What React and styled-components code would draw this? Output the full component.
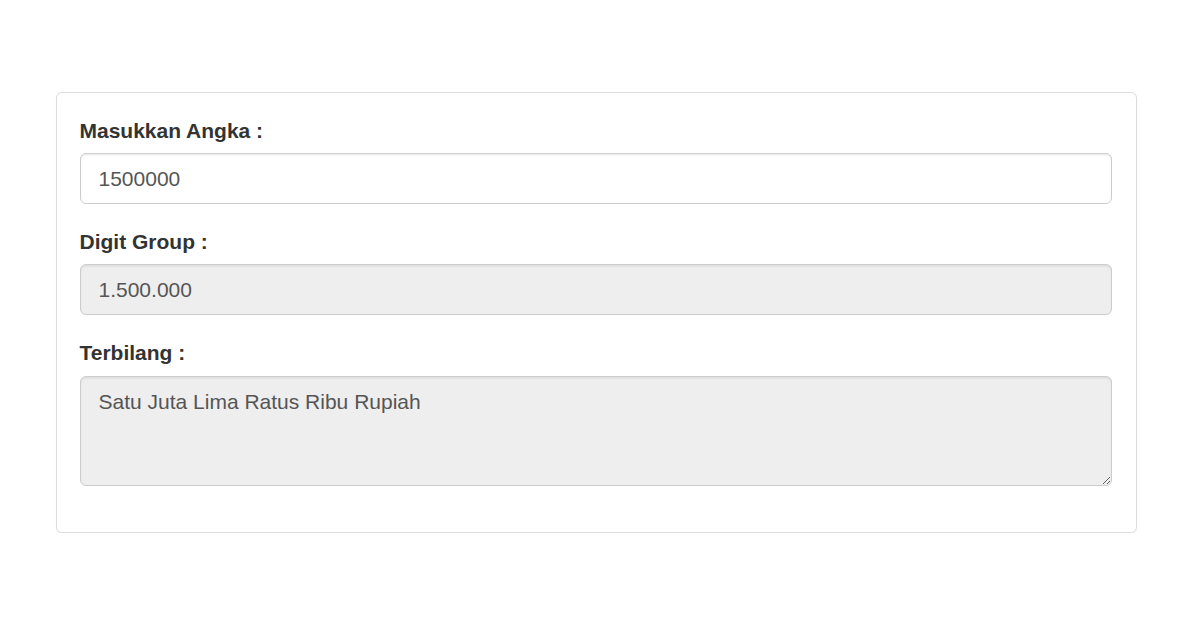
import React from 'react';
import styled, { createGlobalStyle } from 'styled-components';

/* Konversi angka ke terbilang, tampilan form seperti Bootstrap 3 (skala 1.5x) */

const GlobalStyle = createGlobalStyle`
  * { box-sizing: border-box; }
  body {
    margin: 0;
    background: #fff;
    font-family: "Liberation Sans", Arial, Helvetica, sans-serif;
    font-size: 21px;
    line-height: 30px;
    color: #333;
  }
`

const Page = styled.div`
  padding: 92px 0 0 56px;
`

const Panel = styled.div`
  width: 1081px;
  background: #fff;
  border: 1px solid #ddd;
  border-radius: 6px;
  box-shadow: 0 1.5px 1.5px rgba(0, 0, 0, 0.05);
`

const PanelBody = styled.div`
  padding: 22.5px 24px 23.5px 22.5px;
`

const FormGroup = styled.div`
  margin-bottom: ${(p) => (p.$last ? '23px' : '22.5px')};
  padding-top: ${(p) => (p.$last ? '0.5px' : '0')};
`

const Label = styled.label`
  display: block;
  margin-bottom: 7.5px;
  font-weight: bold;
  color: #333;
`

const fieldStyle = `
  display: block;
  width: 100%;
  padding: 9px 18px;
  font-family: "Liberation Sans", Arial, Helvetica, sans-serif;
  font-size: 21px;
  line-height: 30px;
  color: #555;
  border: 1px solid #ccc;
  border-radius: 6px;
  box-shadow: inset 0 1.5px 1.5px rgba(0, 0, 0, 0.075);
  outline: none;
  margin: 0;
`

const Input = styled.input`
  ${fieldStyle}
  height: 51px;
  background: ${(p) => (p.readOnly ? '#eee' : '#fff')};
`

const TextArea = styled.textarea`
  ${fieldStyle}
  height: 110px;
  padding-top: 10px;
  background: #eee;
  resize: vertical;
`

export default function App() {
  return (
    <>
      <GlobalStyle />
      <Page>
        <Panel>
          <PanelBody>
            <FormGroup>
              <Label>Masukkan Angka :</Label>
              <Input type="text" defaultValue="1500000" />
            </FormGroup>
            <FormGroup>
              <Label>Digit Group :</Label>
              <Input type="text" readOnly defaultValue="1.500.000" />
            </FormGroup>
            <FormGroup $last>
              <Label>Terbilang :</Label>
              <TextArea rows={3} readOnly defaultValue="Satu Juta Lima Ratus Ribu Rupiah" />
            </FormGroup>
          </PanelBody>
        </Panel>
      </Page>
    </>
  );
}
